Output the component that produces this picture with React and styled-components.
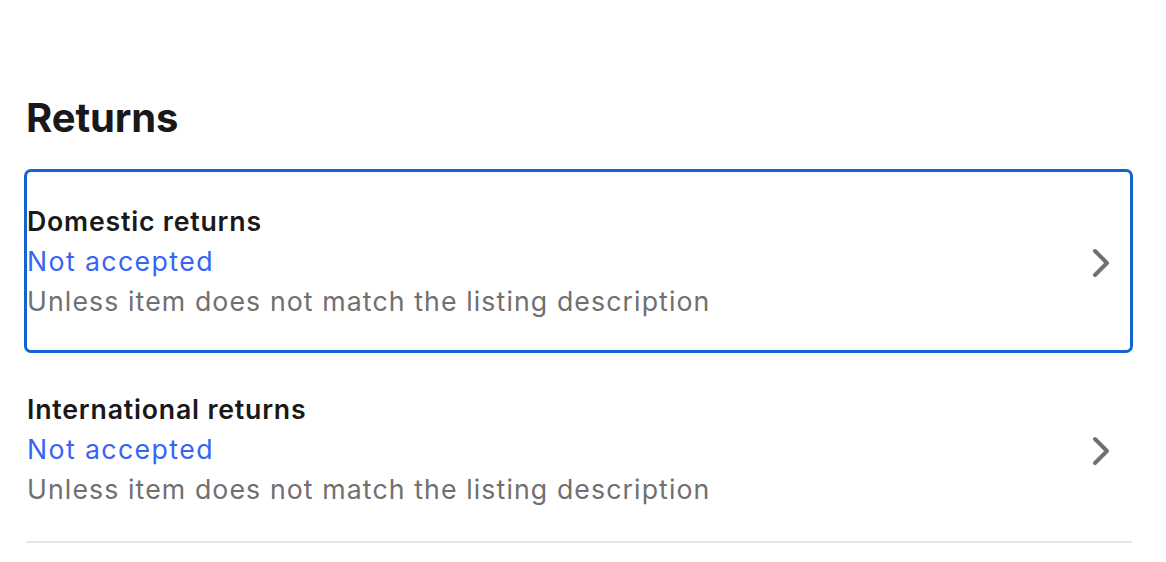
import React from "react";
import styled, { createGlobalStyle } from "styled-components";

const Global = createGlobalStyle`
  html, body { margin: 0; padding: 0; background: #ffffff; }
  body { font-family: Inter, "Noto Sans", "Liberation Sans", sans-serif; }
`;

const Page = styled.div`
  width: 1109px;
  padding: 87px 0 0 24px;
`;

const Title = styled.h2`
  margin: 0 0 20px 2px;
  font-size: 40px;
  line-height: 62px;
  font-weight: 700;
  color: #191919;
  letter-spacing: -0.1px;
`;

const List = styled.div`
  display: flex;
  flex-direction: column;
  gap: 4px;
`;

const Row = styled.div`
  display: flex;
  align-items: center;
  justify-content: space-between;
  border: 3px solid ${(p) => (p.$focused ? "#1463cf" : "transparent")};
  border-radius: 7px;
  padding: 29px 20px 29px 0;
  cursor: pointer;
`;

const Text = styled.div`
  display: flex;
  flex-direction: column;
  font-size: 26.7px;
  line-height: 40px;
  letter-spacing: 1.1px;
`;

const Label = styled.span`
  font-weight: 600;
  color: #191919;
  letter-spacing: 0.8px;
`;

const Status = styled.span`
  color: #3665f3;
  letter-spacing: 1.4px;
`;

const Note = styled.span`
  color: #707070;
`;

const Divider = styled.hr`
  margin: 0 1px 0 2px;
  border: none;
  height: 2px;
  background: #e5e5e5;
`;

const ChevronIcon = styled.svg`
  flex: none;
  margin-top: 4px;
`;

const Chevron = () => (
  <ChevronIcon width="18" height="30" viewBox="0 0 18 30" fill="none">
    <path
      d="M3 3 L15 15 L3 27"
      stroke="#707070"
      strokeWidth="4"
      strokeLinecap="round"
      strokeLinejoin="round"
    />
  </ChevronIcon>
);

const items = [
  { label: "Domestic returns", focused: true },
  { label: "International returns", focused: false },
];

export default function App() {
  return (
    <>
      <Global />
      <Page>
        <Title>Returns</Title>
        <List>
          {items.map((it) => (
            <Row key={it.label} $focused={it.focused}>
              <Text>
                <Label>{it.label}</Label>
                <Status>Not accepted</Status>
                <Note>Unless item does not match the listing description</Note>
              </Text>
              <Chevron />
            </Row>
          ))}
        </List>
        <Divider />
      </Page>
    </>
  );
}
